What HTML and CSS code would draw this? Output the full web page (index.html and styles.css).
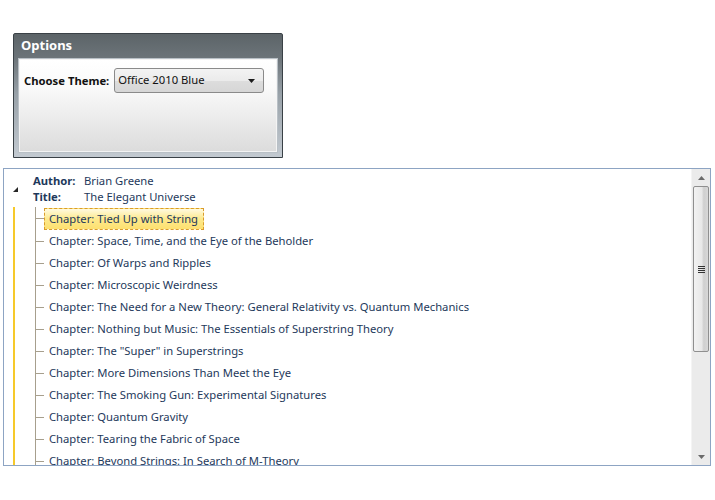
FILE: index.html
```html
<!DOCTYPE html>
<html>
<head>
<meta charset="utf-8">
<link rel="stylesheet" href="styles.css">
</head>
<body>
<div class="options">
  <div class="options-title">Options</div>
  <div class="options-body">
    <div class="theme-row">
      <span class="theme-label">Choose Theme:</span>
      <div class="combo">
        <span class="combo-text">Office 2010 Blue</span>
        <svg class="combo-arrow" width="7" height="4" viewBox="0 0 7 4"><polygon points="0,0 7,0 3.5,4" fill="#1b1b1b"/></svg>
      </div>
    </div>
  </div>
</div>

<div class="tree">
  <div class="tree-content">
    <div class="root-header">
      <div class="expander">
        <svg width="5" height="5" viewBox="0 0 5 5"><polygon points="5,0 5,5 0,5" fill="#262626"/></svg>
      </div>
      <div class="root-info">
        <div class="info-row"><span class="info-key">Author:</span><span>Brian Greene</span></div>
        <div class="info-row"><span class="info-key">Title:</span><span>The Elegant Universe</span></div>
      </div>
    </div>
    <div class="children">
      <div class="chapters">
        <div class="chapter first"><span class="conn"></span><span class="label selected">Chapter: Tied Up with String</span></div>
        <div class="chapter"><span class="conn"></span><span class="label">Chapter: Space, Time, and the Eye of the Beholder</span></div>
        <div class="chapter"><span class="conn"></span><span class="label">Chapter: Of Warps and Ripples</span></div>
        <div class="chapter"><span class="conn"></span><span class="label">Chapter: Microscopic Weirdness</span></div>
        <div class="chapter"><span class="conn"></span><span class="label">Chapter: The Need for a New Theory: General Relativity vs. Quantum Mechanics</span></div>
        <div class="chapter"><span class="conn"></span><span class="label">Chapter: Nothing but Music: The Essentials of Superstring Theory</span></div>
        <div class="chapter"><span class="conn"></span><span class="label">Chapter: The "Super" in Superstrings</span></div>
        <div class="chapter"><span class="conn"></span><span class="label">Chapter: More Dimensions Than Meet the Eye</span></div>
        <div class="chapter"><span class="conn"></span><span class="label">Chapter: The Smoking Gun: Experimental Signatures</span></div>
        <div class="chapter"><span class="conn"></span><span class="label">Chapter: Quantum Gravity</span></div>
        <div class="chapter"><span class="conn"></span><span class="label">Chapter: Tearing the Fabric of Space</span></div>
        <div class="chapter"><span class="conn"></span><span class="label">Chapter: Beyond Strings: In Search of M-Theory</span></div>
      </div>
    </div>
  </div>
  <div class="scrollbar">
    <div class="sb-btn">
      <svg width="7" height="4" viewBox="0 0 7 4"><polygon points="0,4 7,4 3.5,0" fill="#6a6a6a"/></svg>
    </div>
    <div class="sb-track">
      <div class="sb-thumb">
        <svg width="7" height="7" viewBox="0 0 7 7"><rect x="0" y="0" width="7" height="1" fill="#333"/><rect x="0" y="2" width="7" height="1" fill="#333"/><rect x="0" y="4" width="7" height="1" fill="#333"/><rect x="0" y="6" width="7" height="1" fill="#333"/></svg>
      </div>
    </div>
    <div class="sb-btn">
      <svg width="7" height="4" viewBox="0 0 7 4"><polygon points="0,0 7,0 3.5,4" fill="#6a6a6a"/></svg>
    </div>
  </div>
</div>
</body>
</html>
```

FILE: styles.css
```css
html, body {
  margin: 0;
  padding: 0;
  background: #ffffff;
}
body {
  font-family: "Noto Sans", "Open Sans", sans-serif;
  font-size: 11.25px;
  color: #1e395b;
  padding: 33px 0 0 3px;
  height: 500px;
  box-sizing: border-box;
}

.options {
  margin-left: 10px;
  width: 270px;
  height: 125px;
  box-sizing: border-box;
  border: 1px solid #3a4146;
  border-radius: 2px 2px 0 0;
  background: linear-gradient(#5c6468 0px, #6c7479 24px, #98a1a8 60px, #c3cad1 100%);
  display: flex;
  flex-direction: column;
  padding: 0 5px 5px 5px;
}
.options-title {
  height: 25px;
  line-height: 22px;
  color: #ffffff;
  font-weight: bold;
  font-size: 13px;
  padding-left: 2px;
}
.options-body {
  flex: 1;
  border: 1px solid #f4f4f4;
  box-shadow: 0 0 0 1px #b9c0c6;
  background: linear-gradient(#ffffff 0%, #fafafa 30%, #dcdcdc 100%);
  padding: 8px 0 0 4px;
}
.theme-row {
  display: flex;
  align-items: center;
  gap: 5px;
}
.theme-label {
  font-weight: bold;
  color: #111111;
}
.combo {
  width: 150px;
  height: 25px;
  box-sizing: border-box;
  border: 1px solid #8a8a8a;
  border-radius: 3px;
  background: linear-gradient(#f3f3f3 0%, #ebebeb 50%, #dddddd 51%, #d6d6d6 100%);
  display: flex;
  align-items: flex-start;
  justify-content: space-between;
  padding: 2px 8px 0 3px;
}
.combo-text {
  color: #111111;
  line-height: 17px;
}
.combo-arrow {
  margin-top: 8px;
}

.tree {
  margin-top: 10px;
  width: 708px;
  height: 298px;
  box-sizing: border-box;
  border: 1px solid #8da4c3;
  display: flex;
  overflow: hidden;
}
.tree-content {
  flex: 1;
  padding-top: 4px;
  overflow: hidden;
}
.root-header {
  display: flex;
}
.expander {
  width: 29px;
  padding: 14px 0 0 9px;
  box-sizing: border-box;
  line-height: 0;
}
.info-row {
  display: flex;
  line-height: 16px;
  height: 16px;
}
.info-key {
  font-weight: bold;
  width: 51px;
}
.children {
  margin: 2px 0 0 9px;
  border-left: 2px solid #f6c92a;
  padding-left: 20px;
}
.chapters {
  border-left: 1px solid #a79f8d;
}
.chapter {
  display: flex;
  align-items: center;
  height: 22px;
}
.chapter.first {
  height: 23px;
}
.conn {
  width: 8px;
  height: 1px;
  background: #a79f8d;
}
.label {
  padding: 0 4px 0 5px;
  line-height: 20px;
  white-space: nowrap;
}
.label.selected {
  padding: 0 5px 0 4px;
  border: 1px dashed #d99b2c;
  background: linear-gradient(#fffae0 0%, #fde98c 50%, #fde070 100%);
}

.scrollbar {
  width: 18px;
  background: #ebebeb;
  border-left: 1px solid #f4f4f4;
  display: flex;
  flex-direction: column;
}
.sb-btn {
  height: 17px;
  display: flex;
  align-items: center;
  justify-content: center;
}
.sb-track {
  flex: 1;
}
.sb-thumb {
  height: 166px;
  margin: 0 1px;
  box-sizing: border-box;
  border: 1px solid #8f8f8f;
  border-radius: 2px;
  background: linear-gradient(90deg, #f2f2f2 0%, #e8e8e8 55%, #cfcfcf 70%, #d8d8d8 100%);
  display: flex;
  align-items: center;
  justify-content: center;
}
```
